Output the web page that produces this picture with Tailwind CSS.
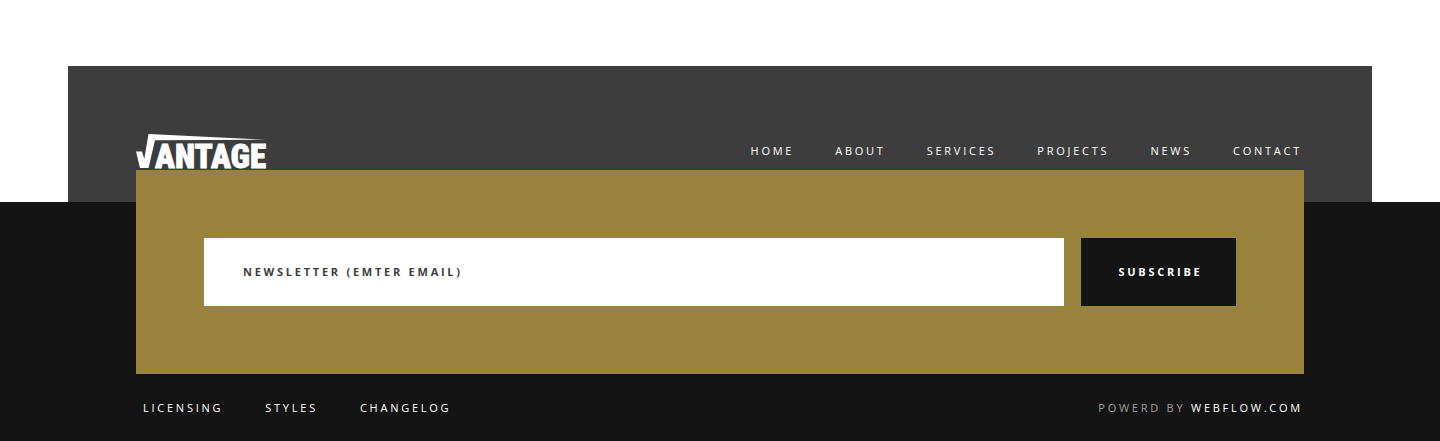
<!DOCTYPE html>
<html lang="en">
<head>
<meta charset="utf-8">
<meta name="viewport" content="width=device-width, initial-scale=1">
<title>Vantage</title>
<script src="https://cdn.jsdelivr.net/npm/@tailwindcss/browser@4"></script>
</head>
<body class="bg-[#141414] font-['Open_Sans',sans-serif] text-[11px] leading-4 tracking-[0.25em] text-white uppercase">
<header class="bg-white px-[68px] pt-[66px]">
  <div class="flex items-center justify-between bg-[#3d3d3d] pr-[70px] pl-[68px] pt-[68px] pb-[34px]">
    <a href="#" aria-label="Vantage" class="block">
      <svg class="block overflow-visible" width="132" height="34" viewBox="0 0 132 34" fill="#fff">
        <path d="M0 17.500H6L8.300 25L12.500 0L131 5.800L19 6.200L12.500 34H4Z"/>
        <text x="19" y="33.500" font-family="'Roboto Condensed', Roboto, sans-serif" font-weight="900" font-size="33" letter-spacing="0" stroke="#fff" stroke-width="0.800">ANTAGE</text>
      </svg>
    </a>
    <nav class="flex gap-[41px]">
      <a href="#">Home</a>
      <a href="#">About</a>
      <a href="#">Services</a>
      <a href="#">Projects</a>
      <a href="#">News</a>
      <a href="#">Contact</a>
    </nav>
  </div>
</header>
<footer class="px-[136px]">
  <form class="relative -mt-8 flex gap-[17px] bg-[#99823e] p-[68px]">
    <input type="email" aria-label="Email" placeholder="Newsletter (Emter email)" class="h-[68px] min-w-0 flex-1 bg-white px-[39px] pb-0.5 font-bold tracking-[0.25em] text-[#3d3d3d] uppercase outline-none placeholder:text-[#3d3d3d]">
    <button type="button" class="h-[68px] w-[155px] bg-[#141414] pl-1 font-bold tracking-[0.25em] uppercase">Subscribe</button>
  </form>
  <div class="flex justify-between pt-[26px] pb-6">
    <nav class="flex gap-[42px] pl-[7px]">
      <a href="#">Licensing</a>
      <a href="#">Styles</a>
      <a href="#">Changelog</a>
    </nav>
    <p class="pr-px text-[#a0a0a0]">Powerd by <a href="#" class="text-white">Webflow.com</a></p>
  </div>
</footer>
</body>
</html>
